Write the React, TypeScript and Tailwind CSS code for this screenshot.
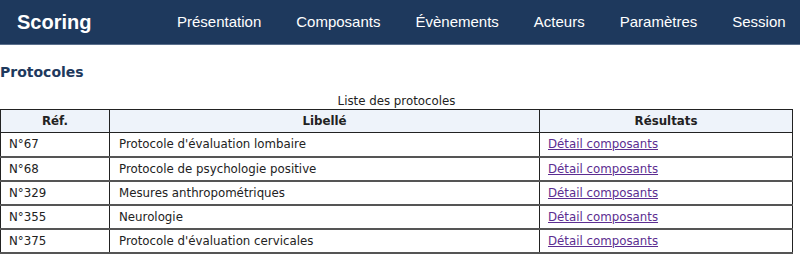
const navItems = ["Présentation", "Composants", "Évènements", "Acteurs", "Paramètres", "Session"];

const protocoles = [
  { ref: "N°67", libelle: "Protocole d'évaluation lombaire" },
  { ref: "N°68", libelle: "Protocole de psychologie positive" },
  { ref: "N°329", libelle: "Mesures anthropométriques" },
  { ref: "N°355", libelle: "Neurologie" },
  { ref: "N°375", libelle: "Protocole d'évaluation cervicales" },
];

export default function App() {
  return (
    <div className="min-h-[259px] bg-white">
      <header className="flex h-[45px] items-center border-b border-[#5a6f8c] bg-[#1e395d] pl-[17px] font-['Liberation_Sans',Arial,sans-serif] text-white">
        <span className="w-[160px] text-[20px] font-bold">Scoring</span>
        <nav className="flex items-center gap-[35px] text-[15px]">
          {navItems.map((item) => (
            <span key={item}>{item}</span>
          ))}
        </nav>
      </header>

      <main className="font-['DejaVu_Sans',Verdana,sans-serif] text-[11.8px] leading-[16px] text-[#222]">
        <h1 className="mt-[17px] text-[14px] leading-[20px] font-bold text-[#1e395d]">Protocoles</h1>
        <table className="mt-[11px] w-[793px] border-collapse border border-[#222]">
          <caption className="h-[16px] text-center">Liste des protocoles</caption>
          <thead>
            <tr className="h-[23px] bg-[#eef3fa]">
              <th className="w-[109px] border border-[#222] font-bold">Réf.</th>
              <th className="w-[430px] border border-[#222] font-bold">Libellé</th>
              <th className="border border-[#222] font-bold">Résultats</th>
            </tr>
          </thead>
          <tbody>
            {protocoles.map((p) => (
              <tr key={p.ref} className="h-[24px] border-b-2 border-b-[#555]">
                <td className="border-x border-[#222] pl-[8px]">{p.ref}</td>
                <td className="border-x border-[#222] pl-[9px]">{p.libelle}</td>
                <td className="border-x border-[#222] pl-[8px]">
                  <a href="#" className="text-[#5c2d91] underline">
                    Détail composants
                  </a>
                </td>
              </tr>
            ))}
          </tbody>
        </table>
      </main>
    </div>
  );
}
